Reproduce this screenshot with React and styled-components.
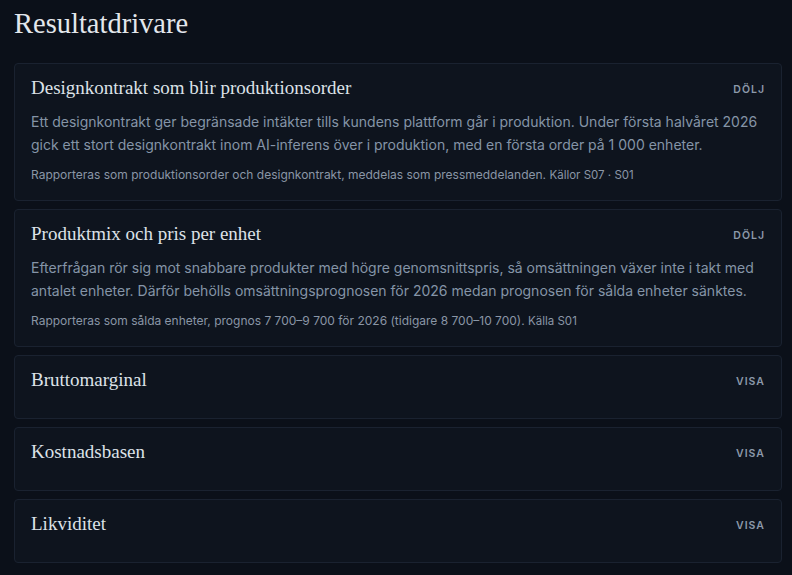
import styled, { createGlobalStyle } from "styled-components";
import { useState } from "react";

const Global = createGlobalStyle`
    html, body {
        margin: 0;
        background: #0b1019;
    }
    body {
        font-family: "Inter", "Noto Sans", sans-serif;
    }
`;

const Page = styled.div`
    padding: 8px 10px 12px 14px;
    display: flex;
    flex-direction: column;
`;

const Heading = styled.h2`
    font-family: "Liberation Serif", "DejaVu Serif", serif;
    font-weight: 400;
    font-size: 28.5px;
    line-height: 32px;
    color: #e3e7ec;
    margin: 0 0 23px 0;
`;

const List = styled.div`
    display: flex;
    flex-direction: column;
    gap: 8px;
`;

const Card = styled.section`
    background: #0e141e;
    border: 1px solid #1a2230;
    border-radius: 4px;
    padding: 12px 16px 16px 16px;
`;

const Header = styled.div`
    display: flex;
    justify-content: space-between;
    align-items: center;
    height: 24px;
    margin-bottom: 10px;
`;

const Title = styled.h3`
    font-family: "Liberation Serif", "DejaVu Serif", serif;
    font-weight: 400;
    font-size: 19px;
    color: #dde2e8;
    margin: 0;
`;

const Toggle = styled.button`
    background: none;
    border: none;
    padding: 0;
    margin-top: 2px;
    font-family: "Inter", sans-serif;
    font-size: 10.5px;
    font-weight: 600;
    letter-spacing: 1px;
    color: #8c99aa;
    cursor: pointer;
`;

const Body = styled.p`
    margin: 0;
    font-size: 14px;
    line-height: 23px;
    color: #8594a7;
`;

const Meta = styled.p`
    margin: 10px 0 0 0;
    font-size: 12px;
    line-height: 17px;
    color: #8a96a6;
    span {
        font-size: 11.5px;
    }
`;

const drivers = [
    {
        title: "Designkontrakt som blir produktionsorder",
        body: "Ett designkontrakt ger begränsade intäkter tills kundens plattform går i produktion. Under första halvåret 2026 gick ett stort designkontrakt inom AI-inferens över i produktion, med en första order på 1 000 enheter.",
        meta: "Rapporteras som produktionsorder och designkontrakt, meddelas som pressmeddelanden.",
        source: "Källor S07 · S01",
        open: true,
    },
    {
        title: "Produktmix och pris per enhet",
        body: "Efterfrågan rör sig mot snabbare produkter med högre genomsnittspris, så omsättningen växer inte i takt med antalet enheter. Därför behölls omsättningsprognosen för 2026 medan prognosen för sålda enheter sänktes.",
        meta: "Rapporteras som sålda enheter, prognos 7 700–9 700 för 2026 (tidigare 8 700–10 700).",
        source: "Källa S01",
        open: true,
    },
    { title: "Bruttomarginal", open: false },
    { title: "Kostnadsbasen", open: false },
    { title: "Likviditet", open: false },
];

function Driver({ item }) {
    const [open, setOpen] = useState(item.open);

    return (
        <Card>
            <Header>
                <Title>{item.title}</Title>
                <Toggle onClick={() => setOpen(!open)}>
                    {open ? "DÖLJ" : "VISA"}
                </Toggle>
            </Header>
            {open && item.body && (
                <>
                    <Body>{item.body}</Body>
                    <Meta>
                        {item.meta} <span>{item.source}</span>
                    </Meta>
                </>
            )}
        </Card>
    );
}

export default function App() {
    return (
        <Page>
            <Global />
            <Heading>Resultatdrivare</Heading>
            <List>
                {drivers.map((d) => (
                    <Driver key={d.title} item={d} />
                ))}
            </List>
        </Page>
    );
}
